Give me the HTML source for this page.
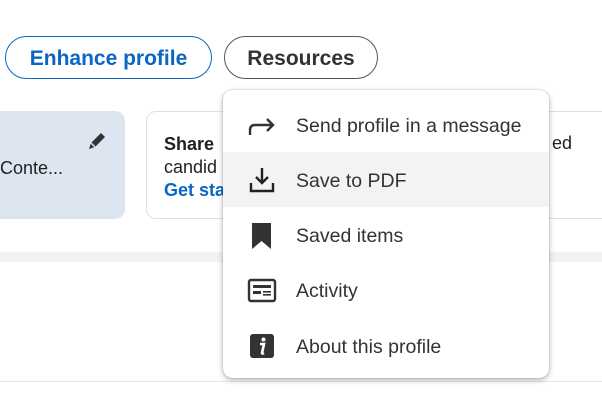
<!DOCTYPE html>
<html><head><style>
*{margin:0;padding:0;box-sizing:border-box}
body{width:602px;height:401px;overflow:hidden;background:#fff;font-family:"Liberation Sans",Arial,sans-serif;position:relative}
.btn{position:absolute;top:36px;height:43px;border-radius:22px;font-weight:bold;font-size:21px;display:flex;align-items:center;justify-content:center;padding-top:3px}
.card{position:absolute;top:111px;height:108px;border-radius:10px}
.menu{position:absolute;left:223px;top:90px;width:326px;height:288px;background:#fff;border-radius:10px;box-shadow:0 2px 6px rgba(0,0,0,.3),0 0 0 1px rgba(0,0,0,.06)}
.item{position:absolute;left:0;width:326px;height:55px;display:flex;align-items:center;font-size:19.5px;color:#333}
.item svg{position:absolute;left:24px}
.item span{position:absolute;left:73px;top:18px}
</style></head><body>
<div style="position:absolute;left:0;top:252px;width:602px;height:10px;background:#f4f2ee"></div>
<div style="position:absolute;left:0;top:381px;width:602px;height:1px;background:#e5e5e5"></div>
<div class="btn" style="left:5px;width:207px;border:1.5px solid #0a66c2;color:#0a66c2">Enhance profile</div>
<div class="btn" style="left:224px;width:154px;border:1.5px solid #555;color:#333">Resources</div>
<div class="card" style="left:-12px;width:137px;background:#dde6f0"></div>
<div style="position:absolute;left:0;top:158px;font-size:18px;color:#222">Conte...</div>
<svg style="position:absolute;left:86px;top:130px" width="22" height="22" viewBox="0 0 22 22"><path d="M3 19 L5 13 L15 3 L19 7 L9 17 Z" fill="#333"/><path d="M5 13 L9 17" stroke="#dde6f0" stroke-width="1.5"/></svg>
<div class="card" style="left:146px;width:480px;border:1px solid #e0e0e0;background:#fff"></div>
<div style="position:absolute;left:164px;top:133px;font-size:18px;color:#222;line-height:23px"><b>Share</b><br>candid<br><b style="color:#0a66c2">Get sta</b></div>
<div style="position:absolute;left:552px;top:133px;font-size:18px;color:#222">ed</div>
<div class="menu">
<div class="item" style="top:7px"><svg width="30" height="30" viewBox="0 0 30 30"><path d="M3 25 V20 Q3 15 8 15 H26 M20 9 L26 15 L20 21" fill="none" stroke="#333" stroke-width="2.4"/></svg><span>Send profile in a message</span></div>
<div class="item" style="top:62px;background:#f3f3f3"><svg width="30" height="30" viewBox="0 0 30 30"><path d="M15 3 V18 M9 12 L15 18 L21 12 M4 18 V26 H26 V18" fill="none" stroke="#222" stroke-width="2.4"/></svg><span>Save to PDF</span></div>
<div class="item" style="top:117px"><svg width="30" height="30" viewBox="0 0 30 30"><path d="M5 3 H24 V29 L14.5 21 L5 29 Z" fill="#333"/></svg><span>Saved items</span></div>
<div class="item" style="top:172px"><svg width="30" height="30" viewBox="0 0 30 30"><rect x="2" y="5" width="26" height="21" rx="2" fill="none" stroke="#333" stroke-width="2.4"/><rect x="6" y="10" width="18" height="3" fill="#333"/><rect x="6" y="16" width="8" height="3" fill="#333"/><rect x="16" y="16" width="8" height="1.6" fill="#333"/><rect x="16" y="19" width="8" height="1.6" fill="#333"/></svg><span>Activity</span></div>
<div class="item" style="top:228px"><svg width="30" height="30" viewBox="0 0 30 30"><rect x="3" y="3" width="24" height="24" rx="3" fill="#333"/><circle cx="16.5" cy="8.5" r="2" fill="#fff"/><path d="M13 13 H17 L15 22 Q15 23 17 22" fill="none" stroke="#fff" stroke-width="2.6"/></svg><span>About this profile</span></div>
</div>
</body></html>
